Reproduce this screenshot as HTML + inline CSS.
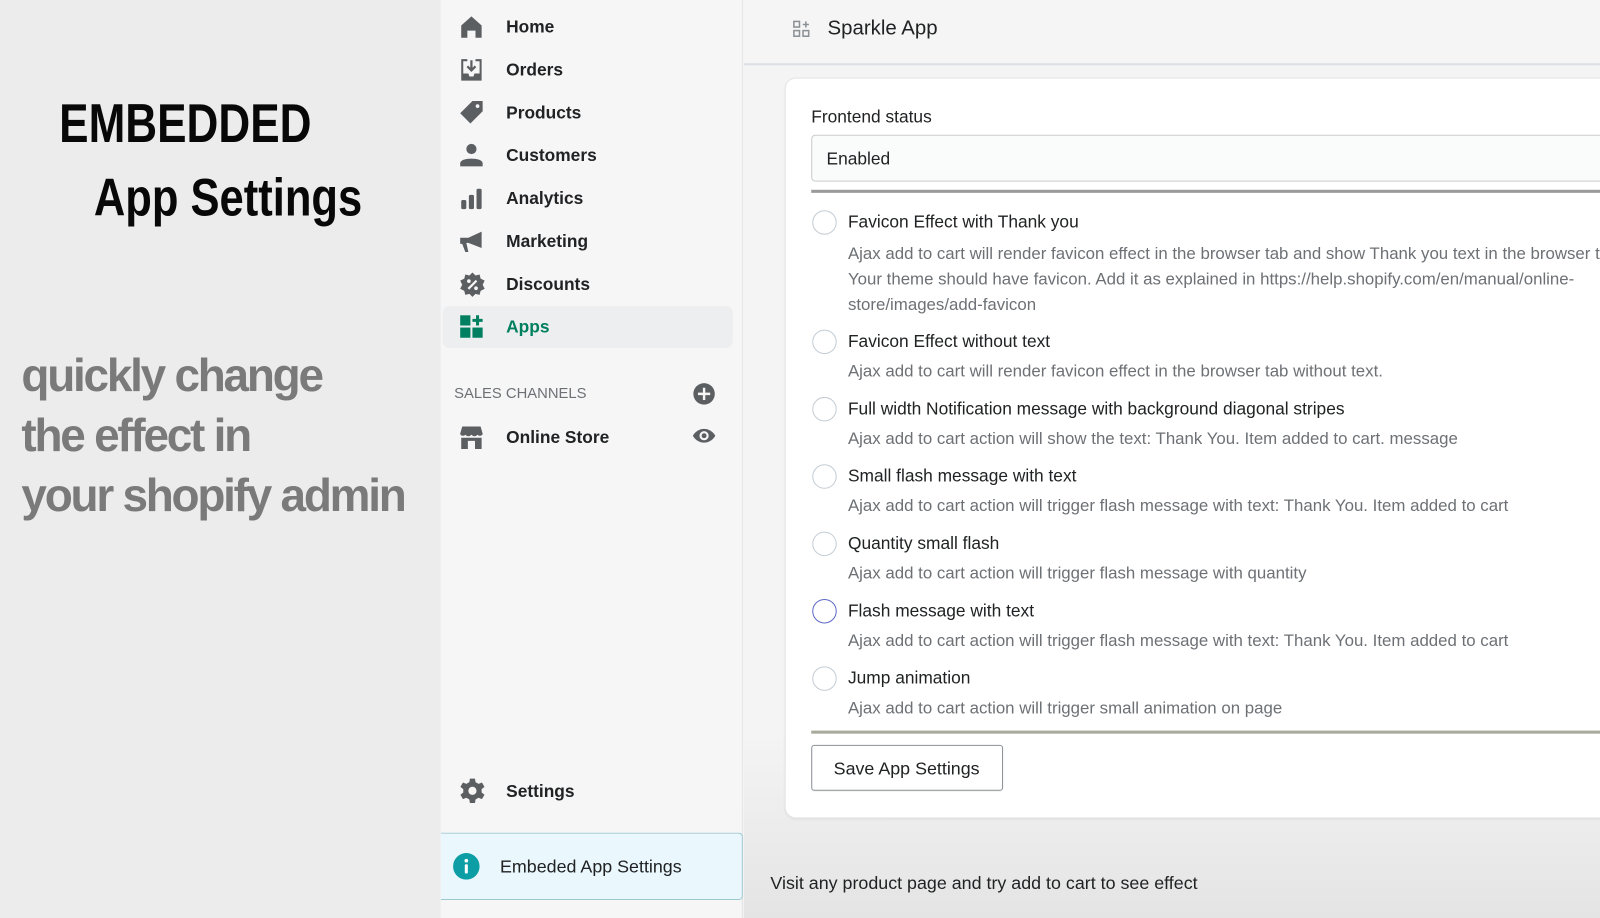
<!DOCTYPE html>
<html><head><meta charset="utf-8"><style>
*{margin:0;padding:0;box-sizing:border-box}
body{width:1600px;height:900px;overflow:hidden;position:relative;font-family:"Liberation Sans",sans-serif;background:#f4f4f4}
#wrap{position:absolute;left:0;top:0;width:1568px;height:882px;transform:scale(1.0204);transform-origin:0 0}
.a{position:absolute;white-space:nowrap}
#left{position:absolute;left:0;top:0;width:432px;height:900px;background:#ececec}
#side{position:absolute;left:432px;top:0;width:296px;height:900px;background:#f6f6f7;border-right:1px solid #e1e3e5}
.nav{position:absolute;left:64px;font-size:17px;font-weight:bold;color:#202223}
.ic{position:absolute;left:18px}
#main{position:absolute;left:729px;top:0;width:871px;height:900px;background:linear-gradient(#f4f4f4 80%,#e4e4e4)}
.t{position:absolute;left:61px;font-size:17px;color:#202223}
.d{position:absolute;left:61px;font-size:16.5px;color:#6d7175}
.r{position:absolute;left:26px;width:24px;height:24px;border-radius:50%;border:1.5px solid #c4cdd5;background:#fff}
</style></head><body><div id="wrap">
<div id="left">
<div class="a" style="left:58px;top:90px;font-size:54px;font-weight:bold;color:#080808;transform:scaleX(0.8);transform-origin:left">EMBEDDED</div>
<div class="a" style="left:92px;top:164px;font-size:52px;font-weight:bold;color:#080808;transform:scaleX(0.82);transform-origin:left">App Settings</div>
<div class="a" style="left:21px;top:338px;font-size:45px;font-weight:bold;letter-spacing:-2.2px;color:#7a7a7a;line-height:59px">quickly change<br>the effect in<br>your shopify admin</div>
</div>
<div id="side">
<svg class="ic" style="top:15px" width="24" height="24" viewBox="0 0 24 24"><path d="M2 10L12 1 22 10V22H16V15H8V22H2Z" fill="#5c5f62"/></svg>
<div class="nav" style="top:17px">Home</div>
<svg class="ic" style="top:56px" width="24" height="24" viewBox="0 0 24 24"><path d="M2 2H8V4H4V16H9L10 19H14L15 16H20V4H16V2H22V23H2Z" fill="#5c5f62"/><path d="M12 3V13M8 9L12 13 16 9" stroke="#5c5f62" stroke-width="2.2" fill="none"/></svg>
<div class="nav" style="top:59px">Orders</div>
<svg class="ic" style="top:98px" width="24" height="24" viewBox="0 0 24 24"><path d="M13 1H23V11L11 23 1 13Z" fill="#5c5f62"/><circle cx="18" cy="6" r="1.8" fill="#f6f6f7"/></svg>
<div class="nav" style="top:101px">Products</div>
<svg class="ic" style="top:140px" width="24" height="24" viewBox="0 0 24 24"><circle cx="12" cy="6" r="5" fill="#5c5f62"/><path d="M1 20C1 14 23 14 23 20V23H1Z" fill="#5c5f62"/></svg>
<div class="nav" style="top:143px">Customers</div>
<svg class="ic" style="top:184px" width="24" height="22" viewBox="0 0 24 22"><rect x="2" y="12" width="5" height="9" rx="1.5" fill="#5c5f62"/><rect x="9.5" y="7" width="5" height="14" rx="1.5" fill="#5c5f62"/><rect x="17" y="1" width="5" height="20" rx="1.5" fill="#5c5f62"/></svg>
<div class="nav" style="top:185px">Analytics</div>
<svg class="ic" style="top:225px" width="24" height="24" viewBox="0 0 24 24"><path d="M1 8H9L22 2V18L9 13H7L9 22H6L3 14H1Z" fill="#5c5f62"/></svg>
<div class="nav" style="top:227px">Marketing</div>
<svg class="ic" style="top:266px" width="26" height="26" viewBox="0 0 26 26"><path d="M13 1L16 4 20 3 21 7 25 9 23 13 25 17 21 19 20 23 16 22 13 25 10 22 6 23 5 19 1 17 3 13 1 9 5 7 6 3 10 4Z" fill="#5c5f62"/><path d="M9 17L17 9" stroke="#f6f6f7" stroke-width="2.2"/><circle cx="9.5" cy="9.5" r="1.8" fill="#f6f6f7"/><circle cx="16.5" cy="16.5" r="1.8" fill="#f6f6f7"/></svg>
<div class="nav" style="top:269px">Discounts</div>
<div style="position:absolute;left:2px;top:300px;width:284px;height:41px;background:#edeeef;border-radius:6px"></div>
<svg class="ic" style="top:308px" width="24" height="24" viewBox="0 0 24 24"><g fill="#008060"><rect x="1" y="1" width="10" height="10"/><rect x="1" y="13" width="10" height="10"/><rect x="13" y="13" width="10" height="10"/><path d="M16.5 1H19.5V4.5H23V7.5H19.5V11H16.5V7.5H13V4.5H16.5Z"/></g></svg>
<div class="nav" style="top:311px;color:#007f5f">Apps</div>
<div class="a" style="left:13px;top:378px;font-size:14.5px;color:#6d7175">SALES CHANNELS</div>
<svg style="position:absolute;left:247px;top:375px" width="22" height="22" viewBox="0 0 22 22"><circle cx="11" cy="11" r="10.5" fill="#5c5f62"/><path d="M11 5V17M5 11H17" stroke="#f6f6f7" stroke-width="2.4"/></svg>
<svg class="ic" style="top:417px" width="24" height="24" viewBox="0 0 24 24"><path d="M3 1H21L23 8C23 10 20 11 18 9 16 11 14 11 12 9 10 11 8 11 6 9 4 11 1 10 1 8Z" fill="#5c5f62"/><path d="M2 12H8.5V23H2ZM15.5 12H22V23H15.5ZM8.5 12H15.5V15H8.5Z" fill="#5c5f62"/></svg>
<div class="nav" style="top:419px">Online Store</div>
<svg style="position:absolute;left:246px;top:418px" width="24" height="18" viewBox="0 0 24 18"><path d="M1 9C6 0 18 0 23 9 18 18 6 18 1 9Z" fill="#5c5f62"/><circle cx="12" cy="9" r="4.5" fill="#f6f6f7"/><circle cx="12" cy="9" r="2.4" fill="#5c5f62"/></svg>
<svg class="ic" style="top:762px" width="26" height="26" viewBox="0 0 26 26"><path d="M10.5 1H15.5L16 4.5 19 6.2 22.3 4.8 24.8 9.2 22 11.4V14.6L24.8 16.8 22.3 21.2 19 19.8 16 21.5 15.5 25H10.5L10 21.5 7 19.8 3.7 21.2 1.2 16.8 4 14.6V11.4L1.2 9.2 3.7 4.8 7 6.2 10 4.5Z" fill="#5c5f62"/><circle cx="13" cy="13" r="4" fill="#f6f6f7"/></svg>
<div class="nav" style="top:766px">Settings</div>
<div style="position:absolute;left:0;top:816px;width:296px;height:66px;background:#eaf7fc;border:1px solid #9cc8cf;border-left:0;border-radius:0 4px 4px 0"></div>
<svg style="position:absolute;left:12px;top:836px" width="26" height="26" viewBox="0 0 26 26"><circle cx="13" cy="13" r="13" fill="#0c9da5"/><rect x="11.5" y="11" width="3" height="9" rx="1" fill="#fff"/><circle cx="13" cy="7.5" r="1.8" fill="#fff"/></svg>
<div class="a" style="left:58px;top:839px;font-size:17.5px;color:#202223">Embeded App Settings</div>
</div>
<div id="main">
<div style="position:absolute;left:0;top:0;width:871px;height:64px;background:#f5f5f5;border-bottom:2px solid #dcdfe3"></div>
<svg style="position:absolute;left:48px;top:20px" width="17" height="17" viewBox="0 0 17 17"><g fill="none" stroke="#8c9196" stroke-width="1.5"><rect x="1" y="1" width="5.5" height="5.5"/><rect x="1" y="10" width="5.5" height="5.5"/><rect x="10" y="10" width="5.5" height="5.5"/><path d="M12.75 1V7M9.75 4H15.75"/></g></svg>
<div class="a" style="left:82px;top:17px;font-size:20px;color:#202223">Sparkle App</div>
<div style="position:absolute;left:41px;top:77px;width:900px;height:724px;background:#fff;border-radius:10px;box-shadow:0 0 0 1px #e4e5e7,0 1px 3px rgba(0,0,0,.1)">
<div class="a" style="left:25px;top:28px;font-size:17px;color:#202223">Frontend status</div>
<div style="position:absolute;left:25px;top:55px;width:900px;height:46px;border:1px solid #c9cccf;border-radius:4px;background:#fafbfb"></div>
<div class="a" style="left:40px;top:69px;font-size:17px;color:#202223">Enabled</div>
<div style="position:absolute;left:25px;top:109px;width:900px;height:3px;background:#9a9a9a"></div>
<div class="r" style="top:129px"></div><div class="t" style="top:131px">Favicon Effect with Thank you</div>
<div class="d" style="top:160px;line-height:25px">Ajax add to cart will render favicon effect in the browser tab and show Thank you text in the browser tab.<br>Your theme should have favicon. Add it as explained in https://help.shopify.com/en/manual/online-<br>store/images/add-favicon</div>
<div class="r" style="top:246px"></div><div class="t" style="top:248px">Favicon Effect without text</div>
<div class="d" style="top:278px">Ajax add to cart will render favicon effect in the browser tab without text.</div>
<div class="r" style="top:312px"></div><div class="t" style="top:314px">Full width Notification message with background diagonal stripes</div>
<div class="d" style="top:344px">Ajax add to cart action will show the text: Thank You. Item added to cart. message</div>
<div class="r" style="top:378px"></div><div class="t" style="top:380px">Small flash message with text</div>
<div class="d" style="top:410px">Ajax add to cart action will trigger flash message with text: Thank You. Item added to cart</div>
<div class="r" style="top:444px"></div><div class="t" style="top:446px">Quantity small flash</div>
<div class="d" style="top:476px">Ajax add to cart action will trigger flash message with quantity</div>
<div class="r" style="top:510px;border-color:#5c6ac4"></div><div class="t" style="top:512px">Flash message with text</div>
<div class="d" style="top:542px">Ajax add to cart action will trigger flash message with text: Thank You. Item added to cart</div>
<div class="r" style="top:576px"></div><div class="t" style="top:578px">Jump animation</div>
<div class="d" style="top:608px">Ajax add to cart action will trigger small animation on page</div>
<div style="position:absolute;left:25px;top:639px;width:900px;height:3px;background:#a8aa9c"></div>
<div style="position:absolute;left:25px;top:653px;width:188px;height:45px;border:1px solid #8c9196;border-radius:3px;background:#fff;box-shadow:0 1px 0 rgba(0,0,0,.05)"></div>
<div class="a" style="left:47px;top:666px;font-size:17.5px;color:#202223">Save App Settings</div>
</div>
<div class="a" style="left:26px;top:855px;font-size:17.5px;color:#202223">Visit any product page and try add to cart to see effect</div>
</div>
</div></body></html>
